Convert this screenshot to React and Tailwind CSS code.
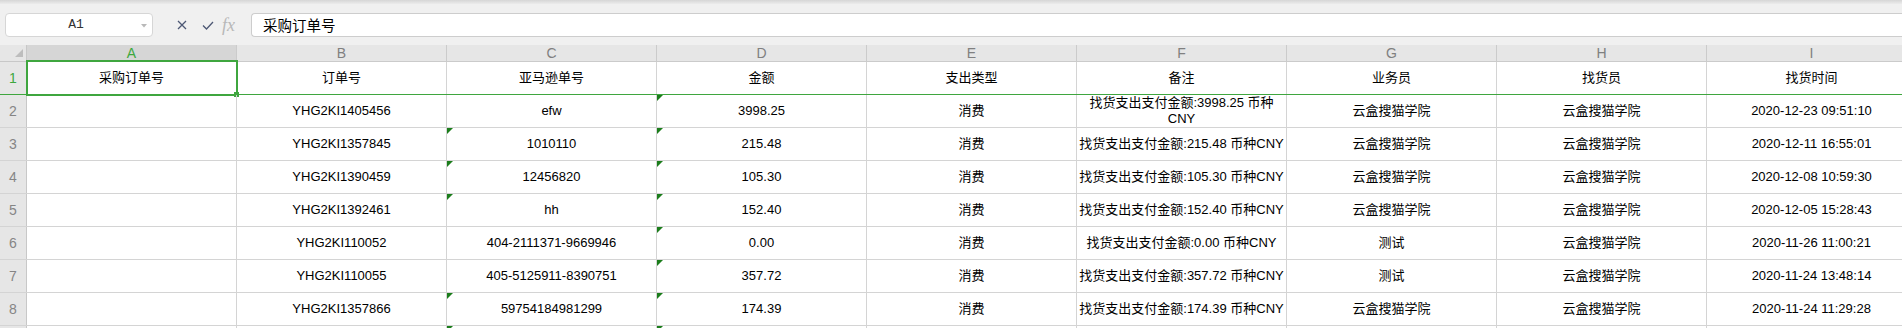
const COLS = ['A', 'B', 'C', 'D', 'E', 'F', 'G', 'H', 'I']

const HEAD = ['采购订单号', '订单号', '亚马逊单号', '金额', '支出类型', '备注', '业务员', '找货员', '找货时间']

const ROWS = [
  { no: 2, tri: ['D'], cells: ['', 'YHG2KI1405456', 'efw', '3998.25', '消费', 'wrap', '云盒搜猫学院', '云盒搜猫学院', '2020-12-23 09:51:10'] },
  { no: 3, tri: ['C', 'D'], cells: ['', 'YHG2KI1357845', '1010110', '215.48', '消费', '找货支出支付金额:215.48 币种CNY', '云盒搜猫学院', '云盒搜猫学院', '2020-12-11 16:55:01'] },
  { no: 4, tri: ['C', 'D'], cells: ['', 'YHG2KI1390459', '12456820', '105.30', '消费', '找货支出支付金额:105.30 币种CNY', '云盒搜猫学院', '云盒搜猫学院', '2020-12-08 10:59:30'] },
  { no: 5, tri: ['C', 'D'], cells: ['', 'YHG2KI1392461', 'hh', '152.40', '消费', '找货支出支付金额:152.40 币种CNY', '云盒搜猫学院', '云盒搜猫学院', '2020-12-05 15:28:43'] },
  { no: 6, tri: ['D'], cells: ['', 'YHG2KI110052', '404-2111371-9669946', '0.00', '消费', '找货支出支付金额:0.00 币种CNY', '测试', '云盒搜猫学院', '2020-11-26 11:00:21'] },
  { no: 7, tri: ['D'], cells: ['', 'YHG2KI110055', '405-5125911-8390751', '357.72', '消费', '找货支出支付金额:357.72 币种CNY', '测试', '云盒搜猫学院', '2020-11-24 13:48:14'] },
  { no: 8, tri: ['C', 'D'], cells: ['', 'YHG2KI1357866', '59754184981299', '174.39', '消费', '找货支出支付金额:174.39 币种CNY', '云盒搜猫学院', '云盒搜猫学院', '2020-11-24 11:29:28'] },
  { no: 9, tri: ['C', 'D'], cells: ['', '', '', '', '', '', '', '', ''] },
]

const font = "font-['Liberation_Sans','Noto_Sans_CJK_SC',sans-serif]"

function Triangle() {
  // number-stored-as-text marker
  return (
    <svg className="absolute left-0 top-0" width="6" height="6" viewBox="0 0 6 6">
      <polygon points="0,0 6,0 0,6" fill="#1b7d1b" />
    </svg>
  )
}

function Toolbar() {
  return (
    <div className="h-[45px] bg-[#f0f0f0] flex flex-col">
      <div className="h-[4px] bg-gradient-to-b from-[#d6d6d6] to-[#ececec]" />
      <div className="flex items-center pl-[5px] pt-[9px]">
        <div className="w-[148px] h-[24px] rounded-[4px] border border-[#d6d6d6] bg-white flex items-center relative">
          <span className="flex-1 text-center text-[13px] text-[#333] font-['Liberation_Mono',monospace] pr-[6px]">A1</span>
          <svg className="absolute right-[5px] top-[10px]" width="6" height="4" viewBox="0 0 6 4">
            <polygon points="0,0 6,0 3,3.5" fill="#b9b9b9" />
          </svg>
        </div>
        <div className="w-[98px] flex items-center">
          <svg className="ml-[24px]" width="10" height="10" viewBox="0 0 10 10">
            <path d="M1 1 L9 9 M9 1 L1 9" stroke="#4d5874" strokeWidth="1.3" fill="none" />
          </svg>
          <svg className="ml-[15px]" width="12" height="9" viewBox="0 0 12 9">
            <path d="M1 4.5 L4.5 8 L11 1" stroke="#4d5874" strokeWidth="1.3" fill="none" />
          </svg>
          <span className="ml-[8px] italic text-[18px] leading-none text-[#b8b8b8] font-['Liberation_Serif',serif]">fx</span>
        </div>
        <div className="flex-1 h-[24px] rounded-l-[4px] border border-r-0 border-[#cdcdcd] bg-white flex items-center pl-[11px]">
          <span className="text-[14.5px] text-black font-['Noto_Sans_CJK_SC',sans-serif] leading-none">采购订单号</span>
        </div>
      </div>
    </div>
  )
}

function ColumnHeader() {
  return (
    <div className="flex h-[17px]">
      <div className="w-[27px] shrink-0 h-full bg-[#e6e6e6] border-r border-b border-[#c8c8c8] relative">
        <svg className="absolute left-[15px] top-[4px]" width="8" height="8" viewBox="0 0 8 8">
          <polygon points="8,0 8,8 0,8" fill="#bdbdbd" />
        </svg>
      </div>
      {COLS.map((c) => (
        <div
          key={c}
          className={`w-[210px] shrink-0 h-full border-r border-b border-[#cbcbcb] flex items-center justify-center text-[14px] ${font} ${c === 'A' ? 'bg-[#d6d6d6] text-[#3ea83e]' : 'bg-[#e6e6e6] text-[#808080]'}`}
        >
          {c}
        </div>
      ))}
    </div>
  )
}

function RowHead({ n, active }) {
  return (
    <div
      className={`w-[27px] shrink-0 h-full bg-[#e6e6e6] border-r border-[#c8c8c8] flex items-center justify-center text-[14px] ${font} ${active ? 'text-[#3ea83e]' : 'text-[#858585]'}`}
    >
      {n}
    </div>
  )
}

function FirstRow() {
  return (
    <div className="flex h-[33px] border-b border-[#3fa63f] relative">
      <RowHead n={1} active />
      {HEAD.map((h, i) => (
        <div key={i} className={`w-[210px] shrink-0 h-full border-r border-[#d4d4d4] flex items-center justify-center text-[13px] text-black ${font}`}>
          {h}
        </div>
      ))}
      <div className="absolute left-[26px] top-[-2px] w-[212px] h-[36px] border-2 border-[#3fa63f] pointer-events-none" />
      <div className="absolute left-[234px] top-[30px] w-[5px] h-[5px] bg-[#3fa63f]" />
    </div>
  )
}

function DataRow({ row }) {
  return (
    <div className="flex h-[33px] border-b border-[#d4d4d4]">
      <RowHead n={row.no} />
      {row.cells.map((v, i) => (
        <div
          key={i}
          className={`w-[210px] shrink-0 h-full border-r border-[#d4d4d4] relative flex items-center justify-center text-center text-[13px] text-black whitespace-nowrap ${font}`}
        >
          {row.tri.includes(COLS[i]) && <Triangle />}
          {v === 'wrap' ? (
            <span className="leading-[16px]">
              找货支出支付金额:3998.25 币种
              <br />
              CNY
            </span>
          ) : (
            v
          )}
        </div>
      ))}
    </div>
  )
}

export default function App() {
  return (
    <div className="w-[1902px] h-[328px] overflow-hidden bg-white">
      <Toolbar />
      <div className="w-[2000px]">
        <ColumnHeader />
        <FirstRow />
        {ROWS.map((r) => (
          <DataRow key={r.no} row={r} />
        ))}
      </div>
    </div>
  )
}
